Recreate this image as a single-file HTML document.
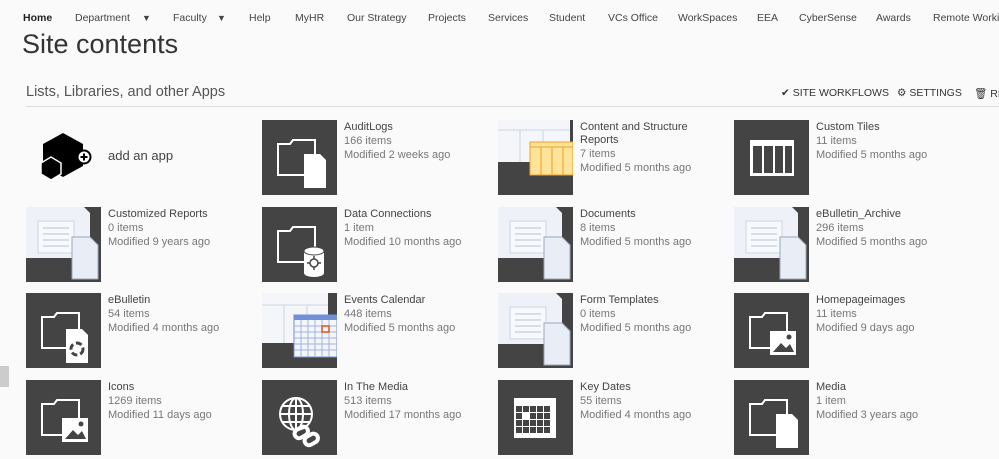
<!DOCTYPE html>
<html><head><meta charset="utf-8"><style>
body{margin:0;width:999px;height:459px;background:#fafafa;font-family:"Liberation Sans",sans-serif;position:relative;overflow:hidden;color:#444}
.a{position:absolute;white-space:nowrap}
.nav{top:12px;font-size:10.5px;color:#444}
.t{position:absolute;width:75px;height:75px;background:#444}
.t svg{display:block}
.n{position:absolute;font-size:11px;color:#444;line-height:13px;white-space:nowrap}
.n span{display:block;color:#777;margin-top:1px}
</style></head><body>
<div class="a nav" style="left:23px;color:#222;font-weight:bold">Home</div>
<div class="a nav" style="left:75px">Department</div><div class="a nav" style="left:142px;font-size:9px;top:13px">▼</div>
<div class="a nav" style="left:173px">Faculty</div><div class="a nav" style="left:217px;font-size:9px;top:13px">▼</div>
<div class="a nav" style="left:249px">Help</div>
<div class="a nav" style="left:295px">MyHR</div>
<div class="a nav" style="left:347px">Our Strategy</div>
<div class="a nav" style="left:428px">Projects</div>
<div class="a nav" style="left:488px">Services</div>
<div class="a nav" style="left:549px">Student</div>
<div class="a nav" style="left:608px">VCs Office</div>
<div class="a nav" style="left:678px">WorkSpaces</div>
<div class="a nav" style="left:757px">EEA</div>
<div class="a nav" style="left:799px">CyberSense</div>
<div class="a nav" style="left:876px">Awards</div>
<div class="a nav" style="left:933px">Remote Working</div>
<div class="a" style="left:22px;top:29px;font-size:27px;color:#333;font-weight:300">Site contents</div>
<div class="a" style="left:26px;top:84px;font-size:14.5px;color:#555">Lists, Libraries, and other Apps</div>
<div class="a" style="left:26px;top:106px;width:973px;height:1px;background:#ddd"></div>
<div class="a" style="left:781px;top:87px;font-size:10.5px;color:#333">&#x2714;&#xFE0E; SITE WORKFLOWS</div>
<div class="a" style="left:897px;top:87px;font-size:10.5px;color:#333">&#x2699; SETTINGS</div>
<div class="a" style="left:974px;top:87px;font-size:10.5px;color:#333">&#x1F5D1;&#xFE0E; RE</div>
<div class="a" style="left:0;top:366px;width:9px;height:21px;background:#ccc"></div>

<!-- add an app -->
<svg class="a" style="left:36px;top:130px" width="60" height="55" viewBox="0 0 60 55">
<polygon points="27,3 47,14 47,36 27,47 7,36 7,14" fill="#000"/>
<polygon points="15,27 25,33 25,44 15,50 5,44 5,33" fill="#000" stroke="#fafafa" stroke-width="1.5"/>
<circle cx="48" cy="27" r="6.5" fill="#fff" stroke="#000" stroke-width="2"/>
<path d="M48 23.5v7M44.5 27h7" stroke="#000" stroke-width="2"/>
</svg>
<div class="a" style="left:108px;top:148px;font-size:13px;color:#444">add an app</div>

<svg width="0" height="0" style="position:absolute">
<defs>
<g id="fold"><path d="M16 24h12l3-4h22v35H16z" fill="none" stroke="#fff" stroke-width="2"/></g>
<g id="light"><rect width="75" height="75" fill="#444"/><path d="M0 0h58l6 6v45H0z" fill="#eef1f7"/><rect x="12" y="14" width="36" height="32" fill="#f7f9fc" stroke="#cdd5e2"/><path d="M17 21h26M17 27h26M17 33h26M17 39h26" stroke="#b8c2d2"/><path d="M46 30h18l8 8v34H46z" fill="#e9eef6" stroke="#9aa7bb"/></g>
</defs></svg>

<!-- row1 -->
<div class="t" style="left:262px;top:120px"><svg width="75" height="75"><use href="#fold"/><path d="M42 34h16l6 6v28H42z" fill="#fff"/></svg></div>
<div class="n" style="left:344px;top:121px">AuditLogs<span>166 items</span><span>Modified 2 weeks ago</span></div>
<div class="t" style="left:498px;top:120px"><svg width="75" height="75"><rect width="75" height="75" fill="#444"/><path d="M0 0h72v42H0z" fill="#f4f6fa"/><path d="M0 10h72M22 10v32M45 10v32" stroke="#cdd5e2"/><rect x="32" y="22" width="43" height="33" fill="#fde49a" stroke="#f0a020"/><path d="M32 27h43M43 27v28M54 27v28M65 27v28" stroke="#f0a020"/></svg></div>
<div class="n" style="left:580px;top:121px">Content and Structure<br>Reports<span>7 items</span><span>Modified 5 months ago</span></div>
<div class="t" style="left:734px;top:120px"><svg width="75" height="75"><rect x="16" y="20" width="44" height="36" fill="#fff"/><path d="M19 26h9v27h-9zM30 26h9v27h-9zM41 26h8v27h-8zM51 26h7v27h-7z" fill="#444"/></svg></div>
<div class="n" style="left:816px;top:121px">Custom Tiles<span>11 items</span><span>Modified 5 months ago</span></div>

<!-- row2 -->
<div class="t" style="left:26px;top:207px"><svg width="75" height="75"><use href="#light"/></svg></div>
<div class="n" style="left:108px;top:208px">Customized Reports<span>0 items</span><span>Modified 9 years ago</span></div>
<div class="t" style="left:262px;top:207px"><svg width="75" height="75"><use href="#fold"/><path d="M42 44v22a10 4 0 0 0 20 0V44z" fill="#fff"/><ellipse cx="52" cy="44" rx="10" ry="4" fill="#fff" stroke="#444"/><circle cx="52" cy="56" r="4" fill="none" stroke="#444" stroke-width="1.5"/><path d="M52 49v3M52 60v3M45 56h3M56 56h3" stroke="#444" stroke-width="1.5"/></svg></div>
<div class="n" style="left:344px;top:208px">Data Connections<span>1 item</span><span>Modified 10 months ago</span></div>
<div class="t" style="left:498px;top:207px"><svg width="75" height="75"><use href="#light"/></svg></div>
<div class="n" style="left:580px;top:208px">Documents<span>8 items</span><span>Modified 5 months ago</span></div>
<div class="t" style="left:734px;top:207px"><svg width="75" height="75"><use href="#light"/></svg></div>
<div class="n" style="left:816px;top:208px">eBulletin_Archive<span>296 items</span><span>Modified 5 months ago</span></div>

<!-- row3 -->
<div class="t" style="left:26px;top:293px"><svg width="75" height="75"><use href="#fold"/><path d="M40 36h16l6 6v28H40z" fill="#fff"/><circle cx="51" cy="56" r="6" fill="none" stroke="#444" stroke-width="3" stroke-dasharray="6 3"/></svg></div>
<div class="n" style="left:108px;top:294px">eBulletin<span>54 items</span><span>Modified 4 months ago</span></div>
<div class="t" style="left:262px;top:293px"><svg width="75" height="75"><rect width="75" height="75" fill="#444"/><path d="M0 0h66v50H0z" fill="#f4f6fa"/><path d="M0 12h66M22 12v38M45 12v38" stroke="#cdd5e2"/><rect x="32" y="22" width="43" height="42" fill="#f4f6fa" stroke="#6f8fd6"/><rect x="32" y="22" width="43" height="5" fill="#6f8fd6"/><path d="M32 33h43M32 39h43M32 45h43M32 51h43M32 57h43M39 27v37M46 27v37M53 27v37M60 27v37M67 27v37" stroke="#9fb2e0"/><rect x="60" y="33" width="7" height="6" fill="none" stroke="#e05020" stroke-width="1.5"/></svg></div>
<div class="n" style="left:344px;top:294px">Events Calendar<span>448 items</span><span>Modified 5 months ago</span></div>
<div class="t" style="left:498px;top:293px"><svg width="75" height="75"><use href="#light"/></svg></div>
<div class="n" style="left:580px;top:294px">Form Templates<span>0 items</span><span>Modified 5 months ago</span></div>
<div class="t" style="left:734px;top:293px"><svg width="75" height="75"><use href="#fold"/><rect x="36" y="38" width="26" height="24" fill="#fff"/><path d="M39 59l8-9 5 5 4-4 4 8z" fill="#444"/><circle cx="55" cy="44" r="2.5" fill="#444"/></svg></div>
<div class="n" style="left:816px;top:294px">Homepageimages<span>11 items</span><span>Modified 9 days ago</span></div>

<!-- row4 -->
<div class="t" style="left:26px;top:380px"><svg width="75" height="75"><use href="#fold"/><rect x="36" y="38" width="26" height="24" fill="#fff"/><path d="M39 59l8-9 5 5 4-4 4 8z" fill="#444"/><circle cx="55" cy="44" r="2.5" fill="#444"/></svg></div>
<div class="n" style="left:108px;top:381px">Icons<span>1269 items</span><span>Modified 11 days ago</span></div>
<div class="t" style="left:262px;top:380px"><svg width="75" height="75"><g fill="none" stroke="#fff" stroke-width="2"><circle cx="34" cy="34" r="16"/><ellipse cx="34" cy="34" rx="7" ry="16"/><path d="M18 34h32M20 26h28M20 42h28M34 18v32"/></g><g fill="none" stroke="#fff" stroke-width="4"><rect x="32" y="48" width="14" height="9" rx="4.5" transform="rotate(-30 39 52)"/><rect x="42" y="55" width="14" height="9" rx="4.5" transform="rotate(-30 49 59)"/></g></svg></div>
<div class="n" style="left:344px;top:381px">In The Media<span>513 items</span><span>Modified 17 months ago</span></div>
<div class="t" style="left:498px;top:380px"><svg width="75" height="75"><rect x="16" y="18" width="42" height="40" fill="#fff"/><g fill="#444"><rect x="18" y="26" width="6" height="6"/><rect x="25" y="26" width="6" height="6"/><rect x="32" y="26" width="6" height="6"/><rect x="39" y="26" width="6" height="6"/><rect x="46" y="26" width="6" height="6"/><rect x="18" y="33" width="6" height="6"/><rect x="32" y="33" width="6" height="6"/><rect x="39" y="33" width="6" height="6"/><rect x="46" y="33" width="6" height="6"/><rect x="18" y="40" width="6" height="6"/><rect x="25" y="40" width="6" height="6"/><rect x="32" y="40" width="6" height="6"/><rect x="39" y="40" width="6" height="6"/><rect x="46" y="40" width="6" height="6"/><rect x="18" y="47" width="6" height="6"/><rect x="25" y="47" width="6" height="6"/><rect x="32" y="47" width="6" height="6"/><rect x="39" y="47" width="6" height="6"/><rect x="46" y="47" width="6" height="6"/></g></svg></div>
<div class="n" style="left:580px;top:381px">Key Dates<span>55 items</span><span>Modified 4 months ago</span></div>
<div class="t" style="left:734px;top:380px"><svg width="75" height="75"><use href="#fold"/><path d="M42 34h16l6 6v28H42z" fill="#fff"/></svg></div>
<div class="n" style="left:816px;top:381px">Media<span>1 item</span><span>Modified 3 years ago</span></div>
</body></html>
